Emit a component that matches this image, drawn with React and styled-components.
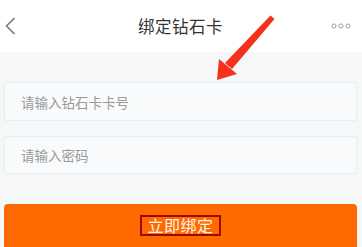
import React from "react";
import styled, { createGlobalStyle } from "styled-components";

const GlobalStyle = createGlobalStyle`
  html, body {
    margin: 0;
    padding: 0;
    background: #f5f7f9;
    font-family: "Noto Sans CJK SC", "Noto Sans", sans-serif;
  }
`

const Page = styled.div`
  position: relative;
  width: 362px;
  height: 247px;
  overflow: hidden;
  background: #f5f7f9;
`

const Header = styled.div`
  height: 52px;
  background: #ffffff;
  display: flex;
  align-items: center;
  justify-content: space-between;
  padding: 0 11px 0 4px;
  box-sizing: border-box;
`

const Title = styled.div`
  font-size: 16.5px;
  color: #333333;
  letter-spacing: 0.5px;
  margin-left: 12px;
`

const Body = styled.div`
  display: flex;
  flex-direction: column;
  padding: 30px 5px 0 4px;
  gap: 15px;
`

const Field = styled.div`
  height: ${({ h }) => h}px;
  box-sizing: border-box;
  border: 1px solid #e9edf0;
  background: #f8fafb;
  border-radius: 2px;
  display: flex;
  align-items: center;
  padding-left: 16px;
  font-size: 13.5px;
  color: #9a9a9a;
`

const Submit = styled.div`
  margin-top: 15px;
  height: 50px;
  background: #ff6a00;
  border-radius: 4px;
  display: flex;
  justify-content: center;
  padding-top: 11px;
  box-sizing: border-box;
`

const SubmitText = styled.span`
  height: 17px;
  line-height: 17px;
  padding: 0 5px;
  border: 2px solid #9a0a00;
  font-size: 16px;
  color: #fff4ea;
  letter-spacing: 0.5px;
`

const Arrow = styled.svg`
  position: absolute;
  left: 0;
  top: 0;
  pointer-events: none;
`

const BackIcon = () => (
  <svg width="14" height="20" viewBox="0 0 14 20">
    <path d="M10.5 2 L2.5 10 L10.5 18" fill="none" stroke="#777" strokeWidth="1.6" />
  </svg>
)

const MoreIcon = () => (
  <svg width="20" height="8" viewBox="0 0 20 8">
    <circle cx="3" cy="4" r="2.1" fill="none" stroke="#a0a0a0" strokeWidth="1" />
    <circle cx="10" cy="4" r="2.1" fill="none" stroke="#a0a0a0" strokeWidth="1" />
    <circle cx="17" cy="4" r="2.1" fill="none" stroke="#a0a0a0" strokeWidth="1" />
  </svg>
)

export default function App() {
  return (
    <Page>
      <GlobalStyle />
      <Header>
        <BackIcon />
        <Title>绑定钻石卡</Title>
        <MoreIcon />
      </Header>
      <Body>
        <Field h={39}>请输入钻石卡卡号</Field>
        <Field h={38}>请输入密码</Field>
        <Submit>
          <SubmitText>立即绑定</SubmitText>
        </Submit>
      </Body>
      <Arrow width="362" height="247" viewBox="0 0 362 247">
        <polygon points="270.5,15.5 274.5,19 232,69 225,63" fill="#f5301d" />
        <polygon points="217,80 219,59 237,74" fill="#f5301d" />
      </Arrow>
    </Page>
  );
}
